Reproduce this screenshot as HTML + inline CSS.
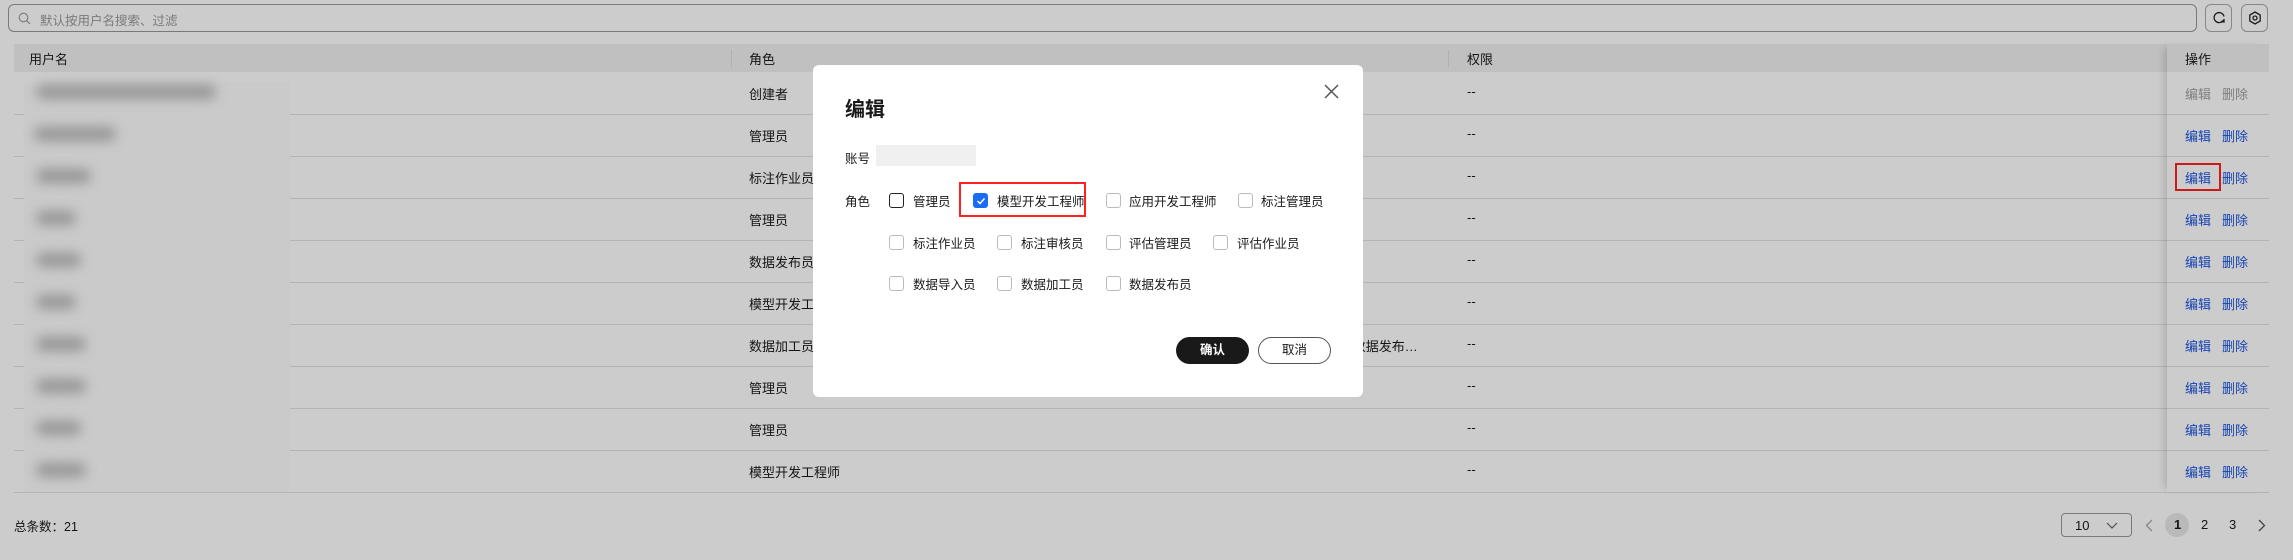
<!DOCTYPE html>
<html><head><meta charset="utf-8">
<style>
*{box-sizing:border-box;margin:0;padding:0}
body{width:2293px;height:560px;background:#fff;position:relative;overflow:hidden;font-family:"Liberation Sans","Noto Sans CJK SC",sans-serif;font-size:13px;color:#191919}
.abs{position:absolute}
.search{left:8px;top:4px;width:2189px;height:28px;border:1px solid #999;border-radius:6px}
.search span{position:absolute;left:31px;top:5px;color:#999;font-size:12.5px}
.ib{top:4px;width:27px;height:28px;border:1px solid #aaa;border-radius:6px}
.hdr{left:14px;top:44px;width:2255px;height:28px;background:#f0f0f0}
.ht{top:49px;font-weight:normal;color:#191919}
.line{left:14px;width:2255px;height:1px;background:#e2e2e2}
.vsep{top:50px;width:1px;height:17px;background:#ddd}
.cell{font-size:13px;white-space:nowrap}
.link{color:#1a55e0;font-size:13px}
.dis{color:#a0a0a0}
.blur{background:#aaa;filter:blur(6px);border-radius:8px;opacity:.8}
.ops{left:2167px;top:44px;width:102px;height:448px;box-shadow:-6px 0 8px -4px rgba(0,0,0,.18)}
.mask{left:0;top:0;width:2293px;height:560px;background:rgba(0,0,0,.2)}
.modal{left:813px;top:65px;width:550px;height:332px;background:#fff;border-radius:6px}
.cb{width:15px;height:15px;border:1px solid #bbb;border-radius:3px;background:#fff}
.lbl{font-size:12.5px;color:#191919}
</style></head><body>
<div class="abs search"><svg class="abs" style="left:9px;top:7px" width="13" height="13" viewBox="0 0 13 13"><circle cx="5.5" cy="5.5" r="4.3" fill="none" stroke="#999" stroke-width="1.1"/><path d="M8.7 8.7L12 12" stroke="#999" stroke-width="1.1"/></svg><span>默认按用户名搜索、过滤</span></div>
<div class="abs ib" style="left:2205px"><svg class="abs" style="left:6px;top:6px" width="14" height="14" viewBox="0 0 14 14"><path d="M11.5 9A5 5 0 1 1 12 5.5" fill="none" stroke="#222" stroke-width="1.3"/><path d="M9 10.5L12 11L12 8" fill="none" stroke="#222" stroke-width="1.3"/></svg></div>
<div class="abs ib" style="left:2241px"><svg class="abs" style="left:6px;top:6px" width="14" height="14" viewBox="0 0 14 14"><path d="M7 1L12.2 4L12.2 10L7 13L1.8 10L1.8 4Z" fill="none" stroke="#222" stroke-width="1.3"/><circle cx="7" cy="7" r="2" fill="none" stroke="#222" stroke-width="1.3"/></svg></div>

<div class="abs hdr"></div>
<div class="abs vsep" style="left:731px"></div>
<div class="abs vsep" style="left:1448px"></div>
<div class="abs ht cell" style="left:29px">用户名</div>
<div class="abs ht cell" style="left:749px">角色</div>
<div class="abs ht cell" style="left:1467px">权限</div>

<div class="abs line" style="top:114px"></div><div class="abs line" style="top:156px"></div><div class="abs line" style="top:198px"></div><div class="abs line" style="top:240px"></div><div class="abs line" style="top:282px"></div><div class="abs line" style="top:324px"></div><div class="abs line" style="top:366px"></div><div class="abs line" style="top:408px"></div><div class="abs line" style="top:450px"></div><div class="abs line" style="top:492px"></div>

<div class="abs" style="left:24px;top:82px;width:266px;height:410px;background:#fdfdfd"></div>
<div class="abs blur" style="left:36px;top:85px;width:180px;height:14px"></div>
<div class="abs blur" style="left:34px;top:127px;width:82px;height:14px"></div>
<div class="abs blur" style="left:36px;top:169px;width:55px;height:14px"></div>
<div class="abs blur" style="left:36px;top:211px;width:40px;height:14px"></div>
<div class="abs blur" style="left:36px;top:253px;width:45px;height:14px"></div>
<div class="abs blur" style="left:36px;top:295px;width:40px;height:14px"></div>
<div class="abs blur" style="left:36px;top:337px;width:50px;height:14px"></div>
<div class="abs blur" style="left:36px;top:379px;width:50px;height:14px"></div>
<div class="abs blur" style="left:36px;top:421px;width:45px;height:14px"></div>
<div class="abs blur" style="left:36px;top:463px;width:50px;height:14px"></div>

<div class="abs cell" style="left:749px;top:84px">创建者</div>
<div class="abs cell" style="left:749px;top:126px">管理员</div>
<div class="abs cell" style="left:749px;top:168px">标注作业员</div>
<div class="abs cell" style="left:749px;top:210px">管理员</div>
<div class="abs cell" style="left:749px;top:252px">数据发布员</div>
<div class="abs cell" style="left:749px;top:294px">模型开发工程师</div>
<div class="abs cell" style="left:749px;top:336px;width:672px;overflow:hidden;text-overflow:ellipsis">数据加工员, 数据导入员, 评估作业员, 评估管理员, 标注审核员, 应用开发工程师, 模型开发工程师, 管理员, 数据发布员, 应用开发工程师, 标注作业员, 评估管理员</div>
<div class="abs cell" style="left:749px;top:378px">管理员</div>
<div class="abs cell" style="left:749px;top:420px">管理员</div>
<div class="abs cell" style="left:749px;top:462px">模型开发工程师</div>

<div class="abs cell" style="left:1467px;top:84px">--</div><div class="abs cell" style="left:1467px;top:126px">--</div><div class="abs cell" style="left:1467px;top:168px">--</div><div class="abs cell" style="left:1467px;top:210px">--</div><div class="abs cell" style="left:1467px;top:252px">--</div><div class="abs cell" style="left:1467px;top:294px">--</div><div class="abs cell" style="left:1467px;top:336px">--</div><div class="abs cell" style="left:1467px;top:378px">--</div><div class="abs cell" style="left:1467px;top:420px">--</div><div class="abs cell" style="left:1467px;top:462px">--</div>

<div class="abs ops"></div>
<div class="abs ht cell" style="left:2185px">操作</div>
<div class="abs link dis" style="left:2185px;top:84px">编辑</div><div class="abs link dis" style="left:2222px;top:84px">删除</div>
<div class="abs link" style="left:2185px;top:126px">编辑</div><div class="abs link" style="left:2222px;top:126px">删除</div>
<div class="abs link" style="left:2185px;top:168px">编辑</div><div class="abs link" style="left:2222px;top:168px">删除</div>
<div class="abs link" style="left:2185px;top:210px">编辑</div><div class="abs link" style="left:2222px;top:210px">删除</div>
<div class="abs link" style="left:2185px;top:252px">编辑</div><div class="abs link" style="left:2222px;top:252px">删除</div>
<div class="abs link" style="left:2185px;top:294px">编辑</div><div class="abs link" style="left:2222px;top:294px">删除</div>
<div class="abs link" style="left:2185px;top:336px">编辑</div><div class="abs link" style="left:2222px;top:336px">删除</div>
<div class="abs link" style="left:2185px;top:378px">编辑</div><div class="abs link" style="left:2222px;top:378px">删除</div>
<div class="abs link" style="left:2185px;top:420px">编辑</div><div class="abs link" style="left:2222px;top:420px">删除</div>
<div class="abs link" style="left:2185px;top:462px">编辑</div><div class="abs link" style="left:2222px;top:462px">删除</div>

<div class="abs cell" style="left:14px;top:516px;font-size:12.5px">总条数：21</div>
<div class="abs" style="left:2061px;top:513px;width:71px;height:24px;border:1px solid #999;border-radius:4px"><span class="abs" style="left:13px;top:4px">10</span><svg class="abs" style="left:44px;top:8px" width="12" height="8" viewBox="0 0 12 8"><path d="M1 1L6 6L11 1" fill="none" stroke="#666" stroke-width="1.2"/></svg></div>
<svg class="abs" style="left:2145px;top:519px" width="8" height="13" viewBox="0 0 8 13"><path d="M7 1L1.5 6.5L7 12" fill="none" stroke="#aaa" stroke-width="1.3"/></svg>
<div class="abs" style="left:2165px;top:513px;width:24px;height:24px;border-radius:12px;background:#e8e8e8"></div>
<div class="abs cell" style="left:2174px;top:517px;font-weight:bold">1</div>
<div class="abs cell" style="left:2201px;top:517px">2</div>
<div class="abs cell" style="left:2229px;top:517px">3</div>
<svg class="abs" style="left:2258px;top:519px" width="8" height="13" viewBox="0 0 8 13"><path d="M1 1L6.5 6.5L1 12" fill="none" stroke="#555" stroke-width="1.3"/></svg>

<div class="abs" style="left:2175px;top:163px;width:46px;height:28px;border:2px solid #ff2020"></div>

<div class="abs mask"></div>

<div class="abs modal">
  <div class="abs" style="left:32px;top:28px;font-size:20px;font-weight:bold">编辑</div>
  <svg class="abs" style="left:511px;top:19px" width="15" height="15" viewBox="0 0 15 15"><path d="M1 1L14 14M14 1L1 14" stroke="#555" stroke-width="1.5"/></svg>
  <div class="abs lbl" style="left:32px;top:83px">账号</div>
  <div class="abs" style="left:63px;top:80px;width:100px;height:21px;background:#f0f0f0"></div>
  <div class="abs lbl" style="left:32px;top:126px">角色</div>

  <div class="abs cb" style="left:76px;top:128px;border:1.5px solid #222"></div><div class="abs lbl" style="left:100px;top:126px">管理员</div>
  <div class="abs" style="left:146px;top:117px;width:127px;height:35px;border:2px solid #ff2020"></div>
  <div class="abs cb" style="left:160px;top:128px;background:#1a6cf5;border-color:#1a6cf5"><svg class="abs" style="left:2px;top:2px" width="10" height="10" viewBox="0 0 10 10"><path d="M1.5 5L4 7.5L8.5 2.5" fill="none" stroke="#fff" stroke-width="1.5"/></svg></div><div class="abs lbl" style="left:184px;top:126px">模型开发工程师</div>
  <div class="abs cb" style="left:293px;top:128px"></div><div class="abs lbl" style="left:316px;top:126px">应用开发工程师</div>
  <div class="abs cb" style="left:425px;top:128px"></div><div class="abs lbl" style="left:448px;top:126px">标注管理员</div>

  <div class="abs cb" style="left:76px;top:170px"></div><div class="abs lbl" style="left:100px;top:168px">标注作业员</div>
  <div class="abs cb" style="left:184px;top:170px"></div><div class="abs lbl" style="left:208px;top:168px">标注审核员</div>
  <div class="abs cb" style="left:293px;top:170px"></div><div class="abs lbl" style="left:316px;top:168px">评估管理员</div>
  <div class="abs cb" style="left:400px;top:170px"></div><div class="abs lbl" style="left:424px;top:168px">评估作业员</div>

  <div class="abs cb" style="left:76px;top:211px"></div><div class="abs lbl" style="left:100px;top:209px">数据导入员</div>
  <div class="abs cb" style="left:184px;top:211px"></div><div class="abs lbl" style="left:208px;top:209px">数据加工员</div>
  <div class="abs cb" style="left:293px;top:211px"></div><div class="abs lbl" style="left:316px;top:209px">数据发布员</div>

  <div class="abs" style="left:363px;top:272px;width:73px;height:27px;border-radius:14px;background:#191919;color:#fff;font-size:12.5px;font-weight:bold;text-align:center;line-height:27px">确认</div>
  <div class="abs" style="left:445px;top:272px;width:73px;height:27px;border-radius:14px;border:1px solid #555;font-size:12.5px;text-align:center;line-height:25px">取消</div>
</div>
</body></html>
